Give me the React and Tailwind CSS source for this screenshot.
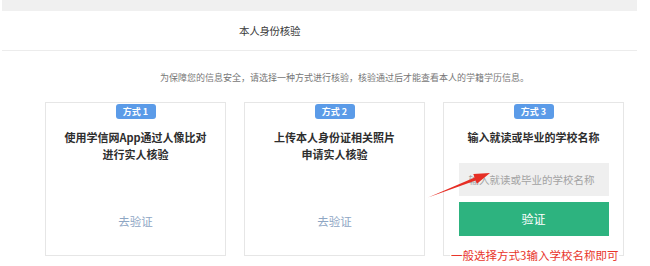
import React from 'react'

const font = { fontFamily: '"Noto Sans CJK SC", "Noto Sans", sans-serif' }

const Badge = ({ n }) => (
  <div className="mx-auto mt-[1px] w-[40px] h-[15px] rounded-[3px] bg-[#5b9be8] text-white text-[9px] leading-[15px] text-center font-bold">
    方式 {n}
  </div>
)

const Card = ({ n, children }) => (
  <div className="w-[181px] h-[154px] border border-[#e6e6e6] bg-white flex flex-col">
    <Badge n={n} />
    {children}
  </div>
)

const App = () => {
  return (
    <div className="relative w-[650px] h-[266px] bg-white overflow-hidden" style={font}>
      <div className="ml-[2px] w-[635px]">
        <div className="h-[11px] bg-[#f0f0f0]"></div>
        <div className="h-[40px] border-b border-[#ececec] flex items-center pl-[237px]">
          <span className="text-[10.5px] text-[#3a3a3a] tracking-[-0.3px]">本人身份核验</span>
        </div>
        <div className="h-[51px] pl-[158px] pt-[21px]">
          <span className="text-[9px] text-[#777] leading-[12px] block">
            为保障您的信息安全，请选择一种方式进行核验，核验通过后才能查看本人的学籍学历信息。
          </span>
        </div>
      </div>

      <div className="flex gap-[18px] pl-[45px]">
        <Card n={1}>
          <div className="mt-[10px] text-[11px] leading-[17px] font-bold text-[#2e2e2e] text-center">
            使用学信网App通过人像比对
            <br />
            进行实人核验
          </div>
          <div className="mt-[50px] text-[11.5px] text-[#8ea6c4] text-center">去验证</div>
        </Card>
        <Card n={2}>
          <div className="mt-[10px] text-[11px] leading-[17px] font-bold text-[#2e2e2e] text-center">
            上传本人身份证相关照片
            <br />
            申请实人核验
          </div>
          <div className="mt-[50px] text-[11.5px] text-[#8ea6c4] text-center">去验证</div>
        </Card>
        <Card n={3}>
          <div className="mt-[10px] text-[11px] leading-[17px] font-bold text-[#2e2e2e] text-center">
            输入就读或毕业的学校名称
          </div>
          <div className="mx-auto mt-[17px] w-[150px] h-[33px] bg-[#efefef] flex items-center pl-[10px]">
            <span className="text-[10.5px] text-[#a3a3a3]">输入就读或毕业的学校名称</span>
          </div>
          <div className="mx-auto mt-[6px] w-[150px] h-[34px] bg-[#2db37f] flex items-center justify-center">
            <span className="text-[12px] text-white">验证</span>
          </div>
        </Card>
      </div>

      <div className="absolute left-[450px] top-[247px] bg-white px-[1px] text-[11.5px] leading-[17px] text-[#e8352b]">
        一般选择方式3输入学校名称即可
      </div>

      <svg className="absolute left-0 top-0" width="650" height="266" viewBox="0 0 650 266">
        <polygon
          points="428,197.5 475.6,180.4 476.9,183.8 490,173 473.3,174.1 474.6,177.4"
          fill="#e62e25"
        />
      </svg>
    </div>
  )
}

export default App
